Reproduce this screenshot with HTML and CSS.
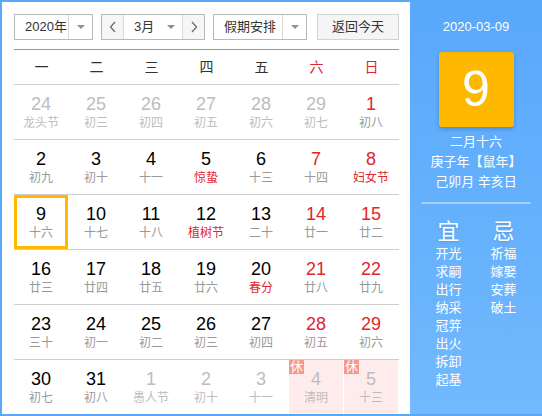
FILE: index.html
```html
<!DOCTYPE html>
<html lang="zh-CN">
<head>
<meta charset="utf-8">
<title>万年历</title>
<link rel="stylesheet" href="styles.css">
</head>
<body>
<div class="cal">
  <div class="main">
    <div class="toolbar">
      <div class="select year">
        <span class="label">2020年</span>
        <span class="arrow"><i class="tri"></i></span>
      </div>
      <div class="select month">
        <span class="nav"><svg width="8" height="12" viewBox="0 0 8 12"><polyline points="6,1 1.5,6 6,11" fill="none" stroke="#666" stroke-width="1.2"/></svg></span>
        <span class="label">3月</span>
        <span class="arrow plain"><i class="tri"></i></span>
        <span class="nav right"><svg width="8" height="12" viewBox="0 0 8 12"><polyline points="2,1 6.5,6 2,11" fill="none" stroke="#666" stroke-width="1.2"/></svg></span>
      </div>
      <div class="select holiday">
        <span class="label">假期安排</span>
        <span class="arrow"><i class="tri"></i></span>
      </div>
      <div class="btn">返回今天</div>
    </div>

    <div class="week">
      <span>一</span><span>二</span><span>三</span><span>四</span><span>五</span><span class="red">六</span><span class="red">日</span>
    </div>

    <div class="row">
      <div class="day other"><b>24</b><em>龙头节</em></div>
      <div class="day other"><b>25</b><em>初三</em></div>
      <div class="day other"><b>26</b><em>初四</em></div>
      <div class="day other"><b>27</b><em>初五</em></div>
      <div class="day other"><b>28</b><em>初六</em></div>
      <div class="day other"><b>29</b><em>初七</em></div>
      <div class="day wk"><b>1</b><em>初八</em></div>
    </div>
    <div class="row">
      <div class="day"><b>2</b><em>初九</em></div>
      <div class="day"><b>3</b><em>初十</em></div>
      <div class="day"><b>4</b><em>十一</em></div>
      <div class="day"><b>5</b><em class="fest">惊蛰</em></div>
      <div class="day"><b>6</b><em>十三</em></div>
      <div class="day wk"><b>7</b><em>十四</em></div>
      <div class="day wk"><b>8</b><em class="fest">妇女节</em></div>
    </div>
    <div class="row">
      <div class="day today"><b>9</b><em>十六</em></div>
      <div class="day"><b>10</b><em>十七</em></div>
      <div class="day"><b>11</b><em>十八</em></div>
      <div class="day"><b>12</b><em class="fest">植树节</em></div>
      <div class="day"><b>13</b><em>二十</em></div>
      <div class="day wk"><b>14</b><em>廿一</em></div>
      <div class="day wk"><b>15</b><em>廿二</em></div>
    </div>
    <div class="row">
      <div class="day"><b>16</b><em>廿三</em></div>
      <div class="day"><b>17</b><em>廿四</em></div>
      <div class="day"><b>18</b><em>廿五</em></div>
      <div class="day"><b>19</b><em>廿六</em></div>
      <div class="day"><b>20</b><em class="fest">春分</em></div>
      <div class="day wk"><b>21</b><em>廿八</em></div>
      <div class="day wk"><b>22</b><em>廿九</em></div>
    </div>
    <div class="row">
      <div class="day"><b>23</b><em>三十</em></div>
      <div class="day"><b>24</b><em>初一</em></div>
      <div class="day"><b>25</b><em>初二</em></div>
      <div class="day"><b>26</b><em>初三</em></div>
      <div class="day"><b>27</b><em>初四</em></div>
      <div class="day wk"><b>28</b><em>初五</em></div>
      <div class="day wk"><b>29</b><em>初六</em></div>
    </div>
    <div class="row last">
      <div class="day"><b>30</b><em>初七</em></div>
      <div class="day"><b>31</b><em>初八</em></div>
      <div class="day other"><b>1</b><em>愚人节</em></div>
      <div class="day other"><b>2</b><em>初十</em></div>
      <div class="day other"><b>3</b><em>十一</em></div>
      <div class="day other rest"><span class="badge">休</span><b>4</b><em>清明</em></div>
      <div class="day other rest"><span class="badge">休</span><b>5</b><em>十三</em></div>
    </div>
  </div>

  <div class="side">
    <div class="date">2020-03-09</div>
    <div class="bigday">9</div>
    <div class="lunar">
      <div>二月十六</div>
      <div>庚子年【鼠年】</div>
      <div>己卯月 辛亥日</div>
    </div>
    <div class="divider"></div>
    <div class="yiji">
      <div class="col">
        <div class="head">宜</div>
        <div>开光</div><div>求嗣</div><div>出行</div><div>纳采</div><div>冠笄</div><div>出火</div><div>拆卸</div><div>起基</div>
      </div>
      <div class="col">
        <div class="head">忌</div>
        <div>祈福</div><div>嫁娶</div><div>安葬</div><div>破土</div>
      </div>
    </div>
  </div>
</div>
</body>
</html>
```

FILE: styles.css
```css
* { box-sizing: border-box; }
html, body { margin: 0; padding: 0; background: #fff; }

.cal {
  width: 542px;
  height: 416px;
  border: 2px solid #5aa9f9;
  border-right: none;
  display: flex;
  font-family: "Liberation Sans", "Noto Sans CJK SC", sans-serif;
  color: #333;
}

.main {
  width: 408px;
  padding: 12px 11px 0 12px;
}

/* toolbar */
.toolbar {
  display: flex;
  height: 36px;
  padding-bottom: 10px;
  border-bottom: 1px solid #5aa9f9;
  font-size: 13px;
}
.select {
  display: flex;
  height: 26px;
  border: 1px solid #b9b9b9;
  background: #fff;
  line-height: 24px;
}
.select .label { flex: 1; padding-left: 10px; color: #333; white-space: nowrap; }
.select .arrow {
  width: 24px;
  border-left: 1px solid #d9d9d9;
  display: flex;
  align-items: center;
  justify-content: center;
}
.select .arrow.plain { border-left: none; width: 22px; }
.tri {
  width: 0; height: 0;
  border-left: 4px solid transparent;
  border-right: 4px solid transparent;
  border-top: 4px solid #8f8f8f;
}
.year { width: 79px; }
.month { width: 104px; margin-left: 8px; }
.holiday { width: 94px; margin-left: 8px; }
.month .label { padding-left: 10px; }
.nav {
  width: 22px;
  background: #f6f6f6;
  border-right: 1px solid #d9d9d9;
  display: flex;
  align-items: center;
  justify-content: center;
}
.nav.right { border-right: none; border-left: 1px solid #d9d9d9; }
.btn {
  width: 82px;
  height: 26px;
  margin-left: 10px;
  border: 1px solid #d3d3d3;
  background: #f5f5f5;
  text-align: center;
  line-height: 24px;
  color: #333;
}

/* weekdays */
.week {
  display: grid;
  grid-template-columns: repeat(7, 55px);
  height: 34px;
  line-height: 34px;
  text-align: center;
  font-size: 14px;
  color: #333;
  border-bottom: 1px solid #cfcfcf;
  height: 35px;
}
.week .red { color: #e0262d; }

/* day rows */
.row {
  display: grid;
  grid-template-columns: repeat(7, 55px);
  height: 55px;
  border-bottom: 1px solid #cfcfcf;
}
.row.last { border-bottom: none; height: 54px; }
.day {
  position: relative;
  width: 54px;
  height: 54px;
  padding-top: 8px;
  text-align: center;
}
.day b {
  display: block;
  font-weight: normal;
  font-size: 18px;
  line-height: 22px;
  color: #000;
}
.day em {
  display: block;
  font-style: normal;
  font-size: 12px;
  line-height: 17px;
  color: #999;
  white-space: nowrap;
}
.day.wk b { color: #e0262d; }
.day em.fest { color: #e0262d; }
.day.other b, .day.other em { color: #bdbdbd; }
.day.today {
  border: 3px solid #ffb900;
  padding-top: 5px;
}
.day.rest { background: #fdeceb; }
.badge {
  position: absolute;
  top: 0;
  left: 0;
  width: 15px;
  height: 14px;
  background: #f7988e;
  color: #fff;
  font-size: 13px;
  line-height: 14px;
  text-align: center;
}

/* side panel */
.side {
  flex: 1;
  background: linear-gradient(to bottom, #58a8fb, #72b9fe);
  color: #fff;
  display: flex;
  flex-direction: column;
  align-items: center;
  padding-top: 16px;
}
.date { font-size: 13px; line-height: 18px; }
.bigday {
  margin-top: 16px;
  width: 75px;
  height: 75px;
  background: #ffb800;
  border-radius: 3px;
  box-shadow: 0 2px 4px rgba(0, 0, 0, 0.2);
  font-size: 50px;
  line-height: 75px;
  text-align: center;
}
.lunar {
  margin-top: 5px;
  font-size: 13px;
  line-height: 20px;
  text-align: center;
}
.divider {
  margin-top: 10px;
  width: 110px;
  height: 2px;
  background: rgba(255, 255, 255, 0.4);
}
.yiji {
  margin-top: 15px;
  width: 110px;
  display: grid;
  grid-template-columns: 55px 55px;
}
.col { text-align: center; font-size: 13px; line-height: 18px; }
.col .head { font-size: 22px; line-height: 26px; text-shadow: 0 1px 2px rgba(0, 0, 0, 0.15); }
```
